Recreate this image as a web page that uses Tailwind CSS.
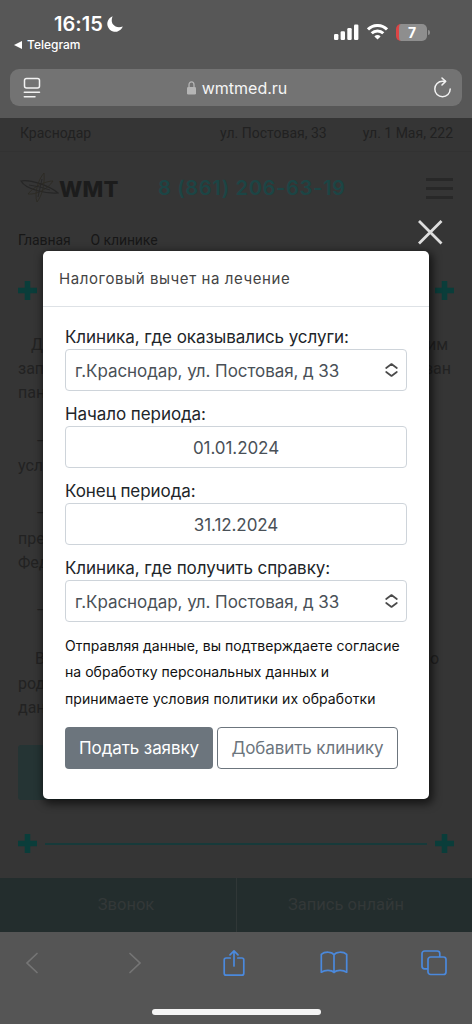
<!DOCTYPE html>
<html lang="ru">
<head>
<meta charset="utf-8">
<title>wmtmed.ru</title>
<script src="https://cdn.jsdelivr.net/npm/@tailwindcss/browser@4"></script>
</head>
<body class="bg-[#353535]">
<div class="relative flex h-[1024px] w-[472px] flex-col overflow-hidden font-['Inter',sans-serif] whitespace-nowrap">

  <!-- Status bar and address bar -->
  <header class="flex h-[118px] flex-col bg-[#575757] text-white">
    <div class="flex h-[69px] justify-between pt-[12px] pr-[42px] pl-[14px]">
      <div>
        <div class="flex items-center gap-[4px] pl-[40px]">
          <span class="text-[20px] leading-[24px] font-semibold tracking-[0.05px]">16:15</span>
          <svg width="16" height="16" viewBox="0 0 16 16" fill="#fff"><path d="M5.6 0.3A8 8 0 1 0 15.8 10.6C11.500 12.2 8 11 6.200 8.600C4.400 6.200 4.300 3.200 5.600 0.300Z"/></svg>
        </div>
        <div class="flex items-center gap-[5px]">
          <svg width="8" height="8" viewBox="0 0 8 8" fill="#fff"><path d="M0 4L8 0V8Z"/></svg>
          <span class="text-[12px] leading-[18px] font-medium">Telegram</span>
        </div>
      </div>
      <div class="flex h-[40px] items-center gap-[8px]">
        <svg width="25" height="16" viewBox="0 0 25 16" fill="#fff"><rect x="0" y="10" width="4.4" height="6" rx="1.2"/><rect x="6.6" y="7.3" width="4.4" height="8.7" rx="1.2"/><rect x="13.3" y="4" width="4.4" height="12" rx="1.2"/><rect x="20" y="0.5" width="4.4" height="15.5" rx="1.2"/></svg>
        <svg width="21" height="16" viewBox="0 0 21 16" fill="none" stroke="#fff" stroke-width="3"><path d="M1 5.4A13.5 13.5 0 0 1 20 5.4"/><path d="M4.7 9.3A8.3 8.3 0 0 1 16.3 9.3"/><path d="M10.5 15.6L7.4 12.4A4.4 4.4 0 0 1 13.6 12.4Z" fill="#fff" stroke="none"/></svg>
        <div class="flex items-center gap-[1px]">
          <div class="flex h-[17px] w-[31px] items-center justify-center overflow-hidden rounded-[5px] border-l-[3px] border-[#dd4545] bg-[#8e8e8e] pr-[2px] text-[14px] leading-[17px] font-bold">7</div>
          <div class="h-[5px] w-[2px] rounded-r bg-[#8e8e8e]"></div>
        </div>
      </div>
    </div>
    <div class="mx-[10px] flex h-[37px] items-center justify-between rounded-[9px] bg-[#737373] pr-[10px] pl-[13px]">
      <svg width="18" height="22" viewBox="0 0 18 22" fill="none" stroke="#f2f2f2" stroke-width="1.5" stroke-linecap="round"><rect x="1.5" y="1.5" width="15" height="9.5" rx="2"/><path d="M1.3 15.3H16.5M1.3 19.8H12"/></svg>
      <div class="flex items-center gap-[6px]">
        <svg width="9" height="14" viewBox="0 0 9 14"><path d="M2 7V3.8a2.5 3 0 0 1 5 0V7" fill="none" stroke="#b5b5b5" stroke-width="1.3"/><rect x="0" y="6" width="9" height="7.6" rx="1.3" fill="#b5b5b5"/></svg>
        <span class="text-[16px] leading-[20px] text-[#f5f5f5]">wmtmed.ru</span>
      </div>
      <svg width="19" height="22" viewBox="0 0 19 22" fill="none" stroke="#f2f2f2" stroke-width="1.5" stroke-linecap="round" stroke-linejoin="round"><path d="M17.2 12A7.7 7.7 0 1 1 9.5 4.3H12.4"/><path d="M9 1L12.6 4.4L9 8"/></svg>
    </div>
  </header>

  <!-- Dimmed page -->
  <main class="flex h-[814px] flex-col bg-[#353535] font-['Roboto',sans-serif] text-[#1f1f1f]">
    <div class="flex h-[34px] items-center border-b border-[#323232] pr-[19px] pb-[2px] pl-[20px] text-[14px] text-[#212121]">
      <span>Краснодар</span><span class="ml-auto">ул. Постовая, 33</span><span class="ml-[36px]">ул. 1 Мая, 222</span>
    </div>
    <div class="flex h-[72px] items-center pr-[19px] pl-[20px]">
      <svg width="39" height="32" viewBox="0 0 39 32" fill="none" stroke="#262626" stroke-width="0.9"><path d="M1 9C10 7 30 14 38 21C28 22 6 18 1 9Z" stroke-width="1.2"/><path d="M17 30C14 21 18 8 24 1C25 12 22 24 17 30Z" stroke="#2c2a24"/><path d="M8 22C14 14 26 9 33 9C28 17 16 23 8 22Z" stroke="#2c2a24"/><path d="M9 13L20 15L30 18M18 25L22 7"/></svg>
      <span class="w-[60px] pt-[1px] font-['Inter'] text-[22px] leading-[30px] font-extrabold tracking-[0.2px] text-[#1c1c1c]">WMT</span>
      <span class="ml-[39px] font-['Inter'] text-[20px] leading-[24px] font-semibold tracking-[0.68px] text-[#1c4545]">8 (861) 206-63-19</span>
      <div class="ml-auto flex w-[27px] flex-col gap-[6px]"><i class="h-[3px] bg-[#282828]"></i><i class="h-[3px] bg-[#282828]"></i><i class="h-[3px] bg-[#282828]"></i></div>
    </div>
    <div class="flex h-[32px] items-center gap-[20px] pl-[18px] text-[14px] tracking-[-0.1px] text-[#171717]"><span>Главная</span><span>О клинике</span></div>
    <div class="flex h-[68px] items-center gap-[8px] px-[18px]">
      <svg width="19" height="19" viewBox="0 0 19 19" fill="#0a3d3a"><path d="M6.7 0H12.3V6.7H19V12.3H12.3V19H6.7V12.3H0V6.7H6.7Z"/></svg>
      <div class="h-[2px] flex-1 bg-[#173a3a]"></div>
      <svg width="19" height="19" viewBox="0 0 19 19" fill="#0a3d3a"><path d="M6.7 0H12.3V6.7H19V12.3H12.3V19H6.7V12.3H0V6.7H6.7Z"/></svg>
    </div>
    <div class="flex h-[421px] flex-col px-[18px] pt-[9px] text-[16px] leading-[24.2px] text-[#222]">
      <div class="flex h-[24.2px] justify-between pr-[6px] pl-[13px]"><span>Д</span><span>им</span></div>
      <div class="flex h-[24.2px] justify-between pr-[3px]"><span>зап</span><span>ван</span></div>
      <div class="h-[24.2px]">пан</div>
      <div class="h-[24.2px]"></div>
      <div class="h-[24.2px] pl-[18px]">–</div>
      <div class="h-[24.2px]">усл</div>
      <div class="h-[24.2px]"></div>
      <div class="h-[24.2px] pl-[18px]">–</div>
      <div class="h-[24.2px]">пре</div>
      <div class="h-[24.2px]">Фед</div>
      <div class="h-[24.2px]"></div>
      <div class="h-[24.2px] pl-[18px]">–</div>
      <div class="h-[24.2px]"></div>
      <div class="flex h-[24.2px] justify-between pr-[15px] pl-[17px]"><span>В</span><span>о</span></div>
      <div class="h-[24.2px]">род</div>
      <div class="h-[24.2px]">дан</div>
    </div>
    <div class="ml-[18px] h-[55px] w-[200px] rounded-[3px] bg-[#253434]"></div>
    <div class="mt-[34px] flex h-[19px] items-center gap-[8px] px-[18px]">
      <svg width="19" height="19" viewBox="0 0 19 19" fill="#0a3d3a"><path d="M6.7 0H12.3V6.7H19V12.3H12.3V19H6.7V12.3H0V6.7H6.7Z"/></svg>
      <div class="h-[2px] flex-1 bg-[#173a3a]"></div>
      <svg width="19" height="19" viewBox="0 0 19 19" fill="#0a3d3a"><path d="M6.7 0H12.3V6.7H19V12.3H12.3V19H6.7V12.3H0V6.7H6.7Z"/></svg>
    </div>
    <div class="mt-auto flex h-[54px] bg-[#232d2d] text-[16.5px] text-[#333838]">
      <div class="flex w-[237px] items-center justify-center border-r border-[#303737] pl-[16px]">Звонок</div>
      <div class="flex flex-1 items-center justify-center pr-[17px]">Запись онлайн</div>
    </div>
  </main>

  <!-- Browser toolbar -->
  <footer class="flex h-[92px] flex-col items-center justify-between bg-[#555555] pb-[9px]">
    <div class="flex h-[61px] w-full items-center pl-[25px]">
      <svg width="14" height="22" viewBox="0 0 14 22" fill="none" stroke="#757575" stroke-width="1.7" stroke-linecap="round"><path d="M12 1.5L2 11L12 20.5"/></svg>
      <svg class="ml-[89px]" width="14" height="22" viewBox="0 0 14 22" fill="none" stroke="#757575" stroke-width="1.7" stroke-linecap="round"><path d="M2 1.5L12 11L2 20.5"/></svg>
      <svg class="ml-[81px]" width="22" height="28" viewBox="0 0 22 28" fill="none" stroke="#4b89dc" stroke-width="1.7" stroke-linecap="round" stroke-linejoin="round"><path d="M7.2 9H3.2A2 2 0 0 0 1.2 11V24.2A2 2 0 0 0 3.2 26.2H18.8A2 2 0 0 0 20.8 24.2V11A2 2 0 0 0 18.8 9H14.8M11 17V2M7 5.8L11 1.8L15 5.8"/></svg>
      <svg class="ml-[75px]" width="28" height="23" viewBox="0 0 28 23" fill="none" stroke="#4b89dc" stroke-width="1.7" stroke-linecap="round" stroke-linejoin="round"><path d="M14 3.8C12 0.7 5 0.2 1.3 3.4V21.2C5 18.7 11.5 18.8 14 21.4C16.5 18.8 23 18.7 26.7 21.2V3.4C23 0.2 16 0.7 14 3.8ZM14 3.8V21.4"/></svg>
      <svg class="ml-[73px]" width="26" height="26" viewBox="0 0 26 26" fill="none" stroke="#4b89dc" stroke-width="1.7"><path d="M7 18.8H3.6A2.6 2.6 0 0 1 1 16.2V3.6A2.6 2.6 0 0 1 3.6 1H16.2A2.6 2.6 0 0 1 18.8 3.6V7"/><rect x="7" y="7" width="18" height="17.5" rx="2.6"/></svg>
    </div>
    <div class="h-[6px] w-[169px] rounded-full bg-[#f4f4f4]"></div>
  </footer>

  <!-- Dialog -->
  <svg class="absolute top-[219px] left-[417px]" width="26" height="26" viewBox="0 0 26 26" stroke="#dedede" stroke-width="2.8"><path d="M2 2L24.5 24.5M24.5 2L2 24.5"/></svg>
  <section class="absolute top-[251px] left-[43px] flex h-[548px] w-[386px] flex-col rounded-[5px] bg-white text-[#212529] shadow-[2px_3px_9px_2px_rgba(0,0,0,0.6)]">
    <h1 class="h-[56px] border-b border-[#dee2e6] pl-[16px] text-[15px] leading-[55px] tracking-[0.58px] text-[#444]">Налоговый вычет на лечение</h1>
    <div class="flex flex-col px-[22px] pt-[18px] text-[17px] tracking-[-0.07px]">
      <label class="h-[24px] leading-[25px]">Клиника, где оказывались услуги:</label>
      <div class="flex h-[42px] items-center justify-between rounded-[4px] border border-[#ced4da] pr-[8px] pl-[9px] text-[#495057]"><span class="pt-[3px]">г.Краснодар, ул. Постовая, д 33</span><svg width="13" height="14" viewBox="0 0 13 14" fill="none" stroke="#4a4a4a" stroke-width="1.7" stroke-linecap="round" stroke-linejoin="round"><path d="M1.2 5L6.5 1L11.8 5M1.2 9L6.5 13L11.8 9"/></svg></div>
      <label class="mt-[11px] h-[24px] leading-[25px]">Начало периода:</label>
      <div class="flex h-[42px] items-center justify-center rounded-[4px] border border-[#ced4da] pt-[3px] text-[#495057]"><span>01.01.2024</span></div>
      <label class="mt-[11px] h-[24px] leading-[25px]">Конец периода:</label>
      <div class="flex h-[42px] items-center justify-center rounded-[4px] border border-[#ced4da] pt-[3px] text-[#495057]"><span>31.12.2024</span></div>
      <label class="mt-[11px] h-[24px] leading-[25px]">Клиника, где получить справку:</label>
      <div class="flex h-[42px] items-center justify-between rounded-[4px] border border-[#ced4da] pr-[8px] pl-[9px] text-[#495057]"><span class="pt-[3px]">г.Краснодар, ул. Постовая, д 33</span><svg width="13" height="14" viewBox="0 0 13 14" fill="none" stroke="#4a4a4a" stroke-width="1.7" stroke-linecap="round" stroke-linejoin="round"><path d="M1.2 5L6.5 1L11.8 5M1.2 9L6.5 13L11.8 9"/></svg></div>
      <p class="mt-[11px] text-[14px] leading-[26.3px] tracking-[0.03px] text-[#111]">Отправляя данные, вы подтверждаете согласие<br>на обработку персональных данных и<br><span class="tracking-[0.09px]">принимаете условия политики их обработки</span></p>
      <div class="mt-[15px] flex gap-[4px]">
        <button class="h-[42px] w-[148px] rounded-[4px] bg-[#6c757d] pt-[2px] tracking-[-0.1px] text-white">Подать заявку</button>
        <button class="h-[42px] w-[181px] rounded-[4px] border border-[#6c757d] pt-[2px] tracking-[-0.1px] text-[#6c757d]">Добавить клинику</button>
      </div>
    </div>
  </section>
</div>
</body>
</html>
